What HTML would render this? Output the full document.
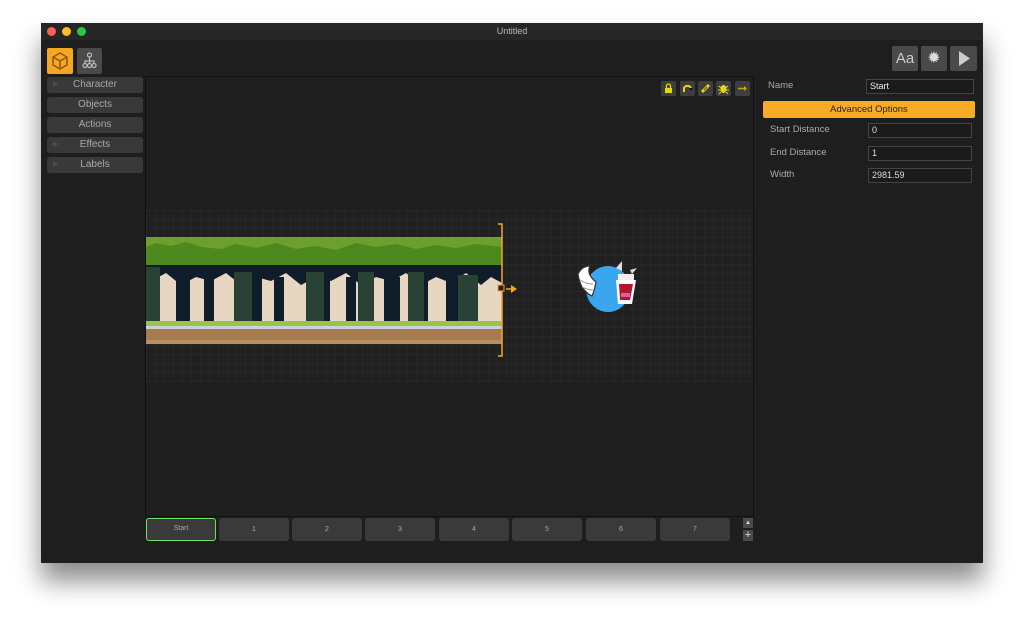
<!DOCTYPE html>
<html><head><meta charset="utf-8"><style>
*{box-sizing:border-box;margin:0;padding:0}
body{width:1024px;height:623px;background:#fff;position:relative;overflow:hidden;font-family:"Liberation Sans",sans-serif}
.abs{position:absolute}
.win{left:41px;top:23px;width:942px;height:540px;background:#1e1e1e;box-shadow:0 18px 24px rgba(0,0,0,.45)}
.title{left:0;top:0;width:942px;height:17px;background:#262626;color:#bbb;font-size:9px;text-align:center;line-height:17px}
.dot{top:4px;width:9px;height:9px;border-radius:50%}
.tb{background:#4a4a4a;border-radius:2px}
.sbtn{left:6px;width:96px;height:16px;background:#393939;border-radius:3px;color:#a9a9a9;font-size:10px;text-align:center;line-height:16px}
.sbtn .tri{position:absolute;left:6px;top:0;color:#4f4f4f;font-size:7px}
.tab{top:495px;width:70px;height:23px;background:#3a3a3a;border-radius:3px;color:#aaa;font-size:7px;text-align:center;line-height:23px}
.lbl{color:#aaa;font-size:9.5px}
.inp{left:827px;width:104px;height:15px;border:1px solid #444;background:#1b1b1b;color:#ddd;font-size:9px;padding-left:3px;line-height:13px}
.ic{top:58px;width:15px;height:15px;background:#3e3e3e;border-radius:2px}
</style></head><body>
<div class="abs win">
 <div class="abs title">Untitled</div>
 <div class="abs dot" style="left:6px;background:#fc5f57"></div>
 <div class="abs dot" style="left:21px;background:#fdbc2e"></div>
 <div class="abs dot" style="left:36px;background:#29c840"></div>
 <div class="abs" style="left:6px;top:25px;width:26px;height:26px;background:#f5a623;border-radius:2px">
  <svg width="26" height="26" viewBox="0 0 26 26"><path d="M13 5l7 4v8l-7 4-7-4V9z M6 9l7 4 7-4 M13 13v8" fill="none" stroke="#8a5a10" stroke-width="1.5"/></svg></div>
 <div class="abs tb" style="left:36px;top:25px;width:25px;height:26px">
  <svg width="25" height="26" viewBox="0 0 25 26"><g fill="none" stroke="#bbb" stroke-width="1.2"><circle cx="12.5" cy="7" r="2"/><path d="M12.5 9v4M8 15v-2h9v2M12.5 13v2"/><circle cx="8" cy="17.5" r="2"/><circle cx="12.5" cy="17.5" r="2"/><circle cx="17" cy="17.5" r="2"/></g></svg></div>
 <div class="abs tb" style="left:851px;top:23px;width:26px;height:25px;color:#ccc;font-size:15px;text-align:center;line-height:25px">Aa</div>
 <div class="abs tb" style="left:880px;top:23px;width:26px;height:25px;color:#ddd;font-size:16px;text-align:center;line-height:25px">✹</div>
 <div class="abs tb" style="left:909px;top:23px;width:27px;height:25px"><svg width="27" height="25"><path d="M9 5l11 7.5L9 20z" fill="#ccc"/></svg></div>
 <div class="abs sbtn" style="top:54px"><span class="tri">▶</span>Character</div>
 <div class="abs sbtn" style="top:74px">Objects</div>
 <div class="abs sbtn" style="top:94px">Actions</div>
 <div class="abs sbtn" style="top:114px"><span class="tri">▶</span>Effects</div>
 <div class="abs sbtn" style="top:134px"><span class="tri">▶</span>Labels</div>
 <div class="abs" style="left:104px;top:53px;width:609px;height:441px;background:#1f1f1f;border:1px solid #111"></div>
 <div class="abs" style="left:105px;top:187px;width:607px;height:172px;background-color:#202020;background-image:linear-gradient(#272727 1px,transparent 1px),linear-gradient(90deg,#272727 1px,transparent 1px);background-size:9px 9px"></div>
 <div class="abs ic" style="left:620px"><svg width="15" height="15"><rect x="4" y="7" width="7" height="5" fill="#e8d21a"/><path d="M5.5 7V5a2 2 0 0 1 4 0v2" fill="none" stroke="#e8d21a" stroke-width="1.3"/></svg></div>
 <div class="abs ic" style="left:639px"><svg width="15" height="15"><path d="M4 11V7a4 4 0 0 1 7 0" fill="none" stroke="#e8d21a" stroke-width="2"/><path d="M9 7h4l-2 3z" fill="#111"/></svg></div>
 <div class="abs ic" style="left:657px"><svg width="15" height="15"><path d="M4 11l7-7" stroke="#e8d21a" stroke-width="3"/><path d="M6 9l3-3" stroke="#3e3e3e" stroke-width="1"/></svg></div>
 <div class="abs ic" style="left:675px"><svg width="15" height="15"><ellipse cx="7.5" cy="8" rx="3" ry="4" fill="#e8d21a"/><path d="M3 5l2 2M12 5l-2 2M2 9h3M13 9h-3M3 13l2-2M12 13l-2-2" stroke="#e8d21a"/></svg></div>
 <div class="abs ic" style="left:694px"><svg width="15" height="15"><path d="M3 7.5h7" stroke="#c9a520" stroke-width="1.5"/><path d="M9 5l3 2.5L9 10z" fill="#c9a520"/></svg></div>
 <svg class="abs" style="left:105px;top:214px" width="356" height="107" viewBox="0 0 356 107">
  <rect width="356" height="107" fill="#e6d6c2"/>
  <rect y="0" width="356" height="22" fill="#6c9f2c"/>
  <path d="M0 10 L10 6 L25 9 L40 5 L55 10 L75 12 L90 7 L110 11 L130 6 L150 12 L170 9 L190 13 L210 6 L230 10 L250 7 L270 12 L290 8 L310 11 L330 7 L356 10 V36 H0z" fill="#4c8a1f"/>
  <path d="M0 28 H356 V46 L345 40 L335 48 L320 36 L305 46 L290 40 L275 48 L260 36 L245 44 L230 40 L215 48 L200 36 L185 44 L170 40 L155 48 L140 36 L125 44 L110 40 L95 48 L80 36 L65 44 L50 40 L35 48 L20 36 L5 44 L0 40z" fill="#0f1d2b"/>
  <g fill="#0f1d2b"><rect x="30" y="40" width="14" height="55"/><rect x="58" y="40" width="10" height="55"/><rect x="100" y="40" width="16" height="55"/><rect x="128" y="40" width="10" height="55"/><rect x="170" y="40" width="14" height="55"/><rect x="200" y="40" width="10" height="55"/><rect x="238" y="40" width="16" height="55"/><rect x="272" y="40" width="10" height="55"/><rect x="300" y="40" width="14" height="55"/></g>
  <g fill="#2a4236"><rect x="0" y="30" width="14" height="65"/><rect x="88" y="35" width="18" height="60"/><rect x="160" y="35" width="18" height="60"/><rect x="212" y="35" width="16" height="60"/><rect x="262" y="35" width="16" height="60"/><rect x="312" y="38" width="20" height="57"/></g>
  <rect y="84" width="356" height="6" fill="#9cc24a"/>
  <rect y="89" width="356" height="3" fill="#c9d2dc"/>
  <rect y="92" width="356" height="15" fill="#a67c4e"/>
  <rect y="103" width="356" height="4" fill="#b8905f"/>
 </svg>
 <svg class="abs" style="left:453px;top:200px" width="30" height="135"><path d="M4 1H8V133H4" fill="none" stroke="#f5a623" stroke-width="1.5"/><rect x="4" y="62" width="6" height="6" fill="#222" stroke="#f5a623"/><path d="M12 66h6" stroke="#f5a623" stroke-width="1.5"/><path d="M17 62l6 4-6 4z" fill="#f5a623"/></svg>
 <svg class="abs" style="left:535px;top:237px" width="62" height="55" viewBox="0 0 62 55">
  <ellipse cx="32" cy="29" rx="22" ry="23" fill="#3aa6ee"/>
  <path d="M2 14 Q6 6 14 6 Q10 14 20 22 Q18 32 16 36 Q4 30 2 14z" fill="#fff" stroke="#333" stroke-width="1.2"/>
  <path d="M4 20 Q10 24 17 24 M6 27 Q12 30 17 30" stroke="#999" fill="none"/>
  <path d="M40 8l6-7v10z M54 10l7-2-5 6z" fill="#ddd"/>
  <path d="M42 14h16v6H42z" fill="#eee"/>
  <path d="M40 20h20l-4 24H42z" fill="#fff"/>
  <path d="M43 24h14l-3 16H44z" fill="#b3152b"/>
  <path d="M45 33h9v4h-9z" fill="#e05ea0"/>
 </svg>
 <div class="abs tab" style="left:105px;border:1.5px solid #6ee06a;line-height:20px">Start</div>
 <div class="abs tab" style="left:178px">1</div>
 <div class="abs tab" style="left:251px">2</div>
 <div class="abs tab" style="left:324px">3</div>
 <div class="abs tab" style="left:398px">4</div>
 <div class="abs tab" style="left:471px">5</div>
 <div class="abs tab" style="left:545px">6</div>
 <div class="abs tab" style="left:619px">7</div>
 <div class="abs" style="left:702px;top:495px;width:10px;height:10px;background:#4a4a4a;color:#ddd;font-size:6px;text-align:center;line-height:10px">▲</div>
 <div class="abs" style="left:702px;top:507px;width:10px;height:11px;background:#4a4a4a;color:#ddd;font-size:11px;text-align:center;line-height:11px">+</div>
 <div class="abs lbl" style="left:727px;top:57px">Name</div>
 <div class="abs inp" style="left:825px;top:56px;width:108px;height:15px;color:#eee">Start</div>
 <div class="abs" style="left:722px;top:78px;width:212px;height:17px;background:#f8ab25;border-radius:2px;color:#222;font-size:9.5px;text-align:center;line-height:17px">Advanced Options</div>
 <div class="abs lbl" style="left:729px;top:101px">Start Distance</div>
 <div class="abs inp" style="top:100px">0</div>
 <div class="abs lbl" style="left:729px;top:124px">End Distance</div>
 <div class="abs inp" style="top:123px">1</div>
 <div class="abs lbl" style="left:729px;top:146px">Width</div>
 <div class="abs inp" style="top:145px">2981.59</div>
</div>
</body></html>
